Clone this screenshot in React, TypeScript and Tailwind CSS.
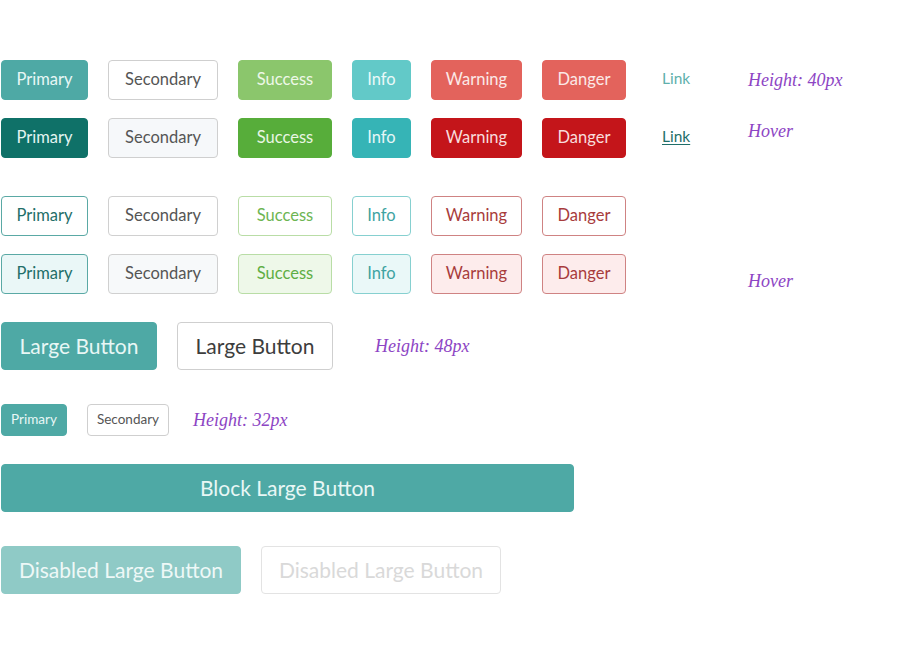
import type { ReactNode } from 'react';

type BtnProps = { children: ReactNode; className: string };

function Btn({ children, className }: BtnProps) {
  return (
    <button
      type="button"
      className={`flex shrink-0 items-center justify-center rounded-[4px] border pb-px font-['Lato',sans-serif] ${className}`}
    >
      {children}
    </button>
  );
}

function Note({ children, className = '' }: { children: ReactNode; className?: string }) {
  return (
    <span className={`font-['Liberation_Serif',serif] text-[18px] italic leading-none text-[#8d45c4] ${className}`}>
      {children}
    </span>
  );
}

const base = 'h-10 text-[16.5px]';

const solid = [
  { label: 'Primary', w: 'w-[87px]', cls: 'border-[#4ea9a5] bg-[#4ea9a5] text-[#e8f7f5]', hover: 'border-[#0f7168] bg-[#0f7168] text-[#e3f4f1]' },
  { label: 'Secondary', w: 'w-[110px]', cls: 'border-[#cfcfcf] bg-white text-[#555]', hover: 'border-[#cfcfcf] bg-[#f6f8fa] text-[#555]' },
  { label: 'Success', w: 'w-[94px]', cls: 'border-[#8bc66c] bg-[#8bc66c] text-[#eef8e8]', hover: 'border-[#57ad3a] bg-[#57ad3a] text-[#e9f6e3]' },
  { label: 'Info', w: 'w-[59px]', cls: 'border-[#62c9c8] bg-[#62c9c8] text-[#eaf9f8]', hover: 'border-[#36b4b6] bg-[#36b4b6] text-[#e6f7f7]' },
  { label: 'Warning', w: 'w-[91px]', cls: 'border-[#e3635c] bg-[#e3635c] text-[#fbe9e7]', hover: 'border-[#c4151a] bg-[#c4151a] text-[#f8dcdc]' },
  { label: 'Danger', w: 'w-[84px]', cls: 'border-[#e3635c] bg-[#e3635c] text-[#fbe9e7]', hover: 'border-[#c4151a] bg-[#c4151a] text-[#f8dcdc]' },
];

const outline = [
  { label: 'Primary', w: 'w-[87px]', cls: 'border-[#5aa9a5] bg-white text-[#1f6f69]', hover: 'border-[#5aa9a5] bg-[#eaf7f7] text-[#1f6f69]' },
  { label: 'Secondary', w: 'w-[110px]', cls: 'border-[#d0d0d0] bg-white text-[#555]', hover: 'border-[#d0d0d0] bg-[#f7f9fa] text-[#555]' },
  { label: 'Success', w: 'w-[94px]', cls: 'border-[#b9dda6] bg-white text-[#6db552]', hover: 'border-[#b9dda6] bg-[#eef8e9] text-[#5fae44]' },
  { label: 'Info', w: 'w-[59px]', cls: 'border-[#86d0d0] bg-white text-[#3ea3a2]', hover: 'border-[#86d0d0] bg-[#eaf8f8] text-[#3ea3a2]' },
  { label: 'Warning', w: 'w-[91px]', cls: 'border-[#cf8383] bg-white text-[#a83c3c]', hover: 'border-[#cf8383] bg-[#fdecec] text-[#a83c3c]' },
  { label: 'Danger', w: 'w-[84px]', cls: 'border-[#cf8383] bg-white text-[#a83c3c]', hover: 'border-[#cf8383] bg-[#fdecec] text-[#a83c3c]' },
];

export default function App() {
  return (
    <div className="min-h-[651px] w-[911px] bg-white pl-px pt-[60px]">
      {/* solid */}
      <div className="flex h-10 items-center gap-5">
        {solid.map((b) => (
          <Btn key={b.label} className={`${base} ${b.w} ${b.cls}`}>{b.label}</Btn>
        ))}
        <span className="ml-4 w-[86px] pb-[2px] font-['Lato',sans-serif] text-[15.5px] text-[#5fb0ac]">Link</span>
        <Note className="-ml-5">Height: 40px</Note>
      </div>
      <div className="mt-[18px] flex h-10 items-center gap-5">
        {solid.map((b) => (
          <Btn key={b.label} className={`${base} ${b.w} ${b.hover}`}>{b.label}</Btn>
        ))}
        <span className="ml-4 w-[86px] pb-[2px] font-['Lato',sans-serif] text-[15.5px] text-[#1f6e69] underline underline-offset-2">Link</span>
        <Note className="-ml-5 mb-[14px]">Hover</Note>
      </div>

      {/* outline */}
      <div className="mt-[38px] flex h-10 items-center gap-5">
        {outline.map((b) => (
          <Btn key={b.label} className={`${base} ${b.w} ${b.cls}`}>{b.label}</Btn>
        ))}
      </div>
      <div className="mt-[18px] flex h-10 items-center gap-5">
        {outline.map((b) => (
          <Btn key={b.label} className={`${base} ${b.w} ${b.hover}`}>{b.label}</Btn>
        ))}
        <Note className="ml-[102px] mt-[13px]">Hover</Note>
      </div>

      {/* large */}
      <div className="mt-7 flex h-12 items-center gap-5">
        <Btn className="h-12 w-[156px] border-[#4ea9a5] bg-[#4ea9a5] text-[21px] text-[#e8f7f5]">Large Button</Btn>
        <Btn className="h-12 w-[156px] border-[#cfcfcf] bg-white text-[21px] text-[#3d3d3d]">Large Button</Btn>
        <Note className="ml-[22px]">Height: 48px</Note>
      </div>

      {/* small */}
      <div className="mt-[34px] flex h-8 items-center gap-5">
        <Btn className="h-8 w-[66px] border-[#4ea9a5] bg-[#4ea9a5] text-[13.5px] text-[#e8f7f5]">Primary</Btn>
        <Btn className="h-8 w-[82px] border-[#cfcfcf] bg-white text-[13.5px] text-[#555]">Secondary</Btn>
        <Note className="ml-1">Height: 32px</Note>
      </div>

      {/* block */}
      <div className="mt-7">
        <Btn className="h-12 w-[573px] border-[#4ea9a5] bg-[#4ea9a5] text-[21px] text-[#e8f7f5]">Block Large Button</Btn>
      </div>

      {/* disabled */}
      <div className="mt-[34px] flex h-12 items-center gap-5">
        <Btn className="h-12 w-[240px] border-[#8fcac6] bg-[#8fcac6] text-[21px] text-[#eef8f7]">Disabled Large Button</Btn>
        <Btn className="h-12 w-[240px] border-[#e3e3e3] bg-white text-[21px] text-[#d9d9d9]">Disabled Large Button</Btn>
      </div>
    </div>
  );
}
